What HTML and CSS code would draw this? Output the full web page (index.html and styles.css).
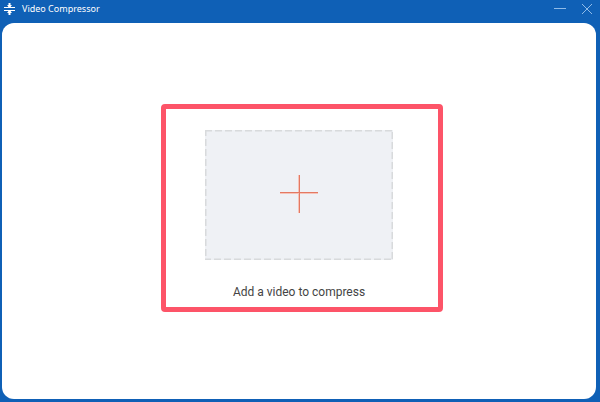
FILE: index.html
```html
<!DOCTYPE html>
<html lang="en">
<head>
    <meta charset="UTF-8">
    <meta name="viewport" content="width=device-width, initial-scale=1.0">
    <title>Video Compressor</title>
    <link rel="stylesheet" href="styles.css">
</head>
<body>
    <header class="titlebar">
        <svg class="logo" viewBox="0 0 12 12" aria-hidden="true">
            <path d="M0 4.5h11M0 7.5h11" />
            <path class="stem" d="M5.5 0v4M5.5 12V8" />
            <path class="arrow" d="M3 2h5L5.5 5zM3 10h5L5.5 7z" />
        </svg>
        <h1>Video Compressor</h1>
        <div class="window-controls">
            <button type="button" aria-label="Minimize">
                <svg viewBox="0 0 12 12"><path d="M0 5.5h12" /></svg>
            </button>
            <button type="button" aria-label="Close">
                <svg viewBox="0 0 12 12"><path d="M1 1l10 10M11 1L1 11" /></svg>
            </button>
        </div>
    </header>
    <main class="panel">
        <div class="highlight">
            <button type="button" class="dropzone" aria-labelledby="add-label">
                <svg class="outline" aria-hidden="true"><rect width="100%" height="100%" /></svg>
                <svg class="plus" viewBox="0 0 38 38" aria-hidden="true">
                    <path class="soft" d="M0 18h38M19 0v38" />
                    <path d="M0 17.5h38M19.5 0v38" />
                </svg>
            </button>
            <p id="add-label">Add a video to compress</p>
        </div>
    </main>
</body>
</html>
```

FILE: styles.css
```css
* {
    box-sizing: border-box;
}

body {
    display: flex;
    flex-direction: column;
    min-height: 100vh;
    margin: 0;
    padding: 0 4px 3px 2px;
    background: #0f60b6;
    font-family: 'Noto Sans', 'Open Sans', sans-serif;
}

button {
    border: 0;
    padding: 0;
    background: none;
    cursor: pointer;
}

/* Title bar */
.titlebar {
    display: flex;
    align-items: center;
    height: 23px;
    padding: 0 3px 6px 2px;
    color: #fff;
}

.logo {
    width: 12px;
    height: 12px;
    margin-right: 6px;
    stroke: #fff;
    stroke-width: 1;
}

.logo .stem {
    stroke-width: 2;
}

.logo .arrow {
    fill: #fff;
    stroke: none;
}

.titlebar h1 {
    flex: 1;
    margin: 0;
    font-size: 9px;
    font-weight: 400;
    line-height: 16px;
}

.window-controls {
    display: flex;
    gap: 15px;
}

.window-controls svg {
    display: block;
    width: 12px;
    height: 12px;
    stroke: #8fbbe8;
    stroke-width: 1;
}

/* Content */
.panel {
    flex: 1;
    display: flex;
    align-items: center;
    justify-content: center;
    padding: 0 0 6px 6px;
    border-radius: 12px;
    background: #fff;
}

.highlight {
    padding: 21px 45px 5px 39px;
    border: 5px solid #fd5468;
    border-radius: 4px;
}

.dropzone {
    position: relative;
    display: grid;
    place-items: center;
    width: 188px;
    height: 130px;
    padding-bottom: 2px;
    background: #eff1f5;
}

.outline {
    position: absolute;
    inset: 0;
    width: 100%;
    height: 100%;
    fill: none;
    stroke: #d8dadc;
    stroke-width: 3;
    stroke-dasharray: 7 3;
}

.plus {
    width: 38px;
    height: 38px;
    stroke: #e47962;
    stroke-width: 1;
}

.plus .soft {
    stroke: #f6c3b8;
    stroke-width: 2;
}

.highlight p {
    margin: 22px 0 0;
    color: #444;
    font-family: Roboto, 'Noto Sans', sans-serif;
    font-size: 12px;
    line-height: 20px;
    text-align: center;
}
```
